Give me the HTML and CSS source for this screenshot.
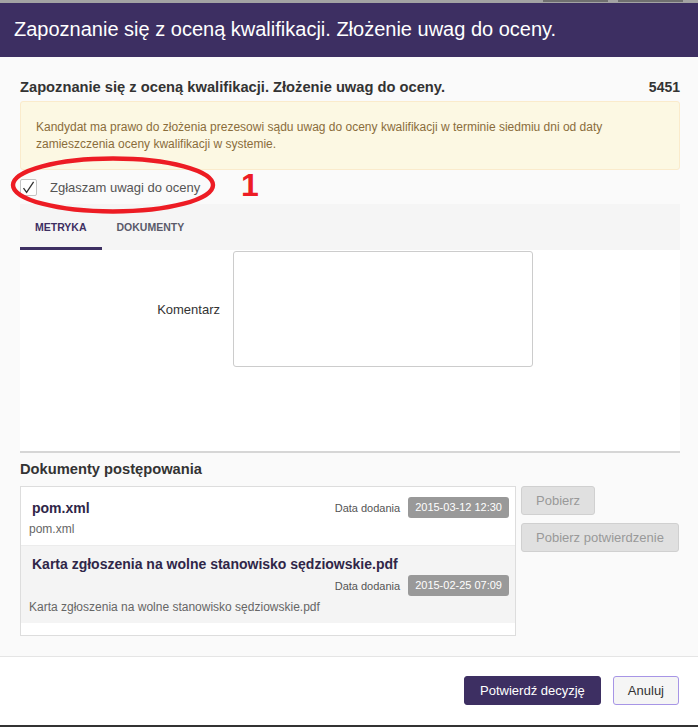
FILE: index.html
```html
<!DOCTYPE html>
<html lang="pl">
<head>
<meta charset="utf-8">
<title>Zapoznanie się z oceną kwalifikacji</title>
<link rel="stylesheet" href="styles.css">
</head>
<body>
<div class="topstrip"><span class="seg seg1"></span><span class="seg seg2"></span></div>
<div class="modal">
  <header class="modal-header">
    <h1>Zapoznanie się z oceną kwalifikacji. Złożenie uwag do oceny.</h1>
  </header>
  <div class="modal-body">
    <div class="section-head">
      <h2>Zapoznanie się z oceną kwalifikacji. Złożenie uwag do oceny.</h2>
      <span class="num">5451</span>
    </div>
    <div class="alert">Kandydat ma prawo do złożenia prezesowi sądu uwag do oceny kwalifikacji w terminie siedmiu dni od daty zamieszczenia oceny kwalifikacji w systemie.</div>
    <div class="check-row">
      <span class="cbox"><svg width="15" height="15" viewBox="0 0 15 15"><path d="M2.5 8.2 L5.6 12.4 L12.6 1.8" fill="none" stroke="#333" stroke-width="1.3"/></svg></span>
      <span class="check-label">Zgłaszam uwagi do oceny</span>
      <svg class="annot-ellipse" width="206" height="58" viewBox="0 0 206 58"><ellipse cx="103" cy="29" rx="100" ry="26.5" fill="none" stroke="#ed1c24" stroke-width="4.4"/></svg>
      <span class="annot-num">1</span>
    </div>
    <nav class="tabs">
      <a class="tab active">METRYKA</a>
      <a class="tab">DOKUMENTY</a>
    </nav>
    <div class="tab-pane">
      <div class="form-row">
        <label class="form-label">Komentarz</label>
        <div class="textarea"></div>
      </div>
    </div>
    <h3 class="docs-title">Dokumenty postępowania</h3>
    <div class="docs">
      <div class="doc-list">
        <div class="doc doc-first">
          <div class="doc-row">
            <span class="doc-name">pom.xml</span>
            <span class="doc-date"><span class="date-label">Data dodania</span><span class="badge">2015-03-12 12:30</span></span>
          </div>
          <div class="doc-desc">pom.xml</div>
        </div>
        <div class="doc doc-second">
          <div class="doc-name">Karta zgłoszenia na wolne stanowisko sędziowskie.pdf</div>
          <div class="doc-date doc-date-right"><span class="date-label">Data dodania</span><span class="badge">2015-02-25 07:09</span></div>
          <div class="doc-desc">Karta zgłoszenia na wolne stanowisko sędziowskie.pdf</div>
        </div>
      </div>
      <div class="doc-actions">
        <button class="btn-disabled">Pobierz</button>
        <button class="btn-disabled">Pobierz potwierdzenie</button>
      </div>
    </div>
  </div>
  <footer class="modal-footer">
    <button class="btn-primary">Potwierdź decyzję</button>
    <button class="btn-default">Anuluj</button>
  </footer>
</div>
<div class="bottom-line"></div>
</body>
</html>
```

FILE: styles.css
```css
* { box-sizing: border-box; }
html, body { margin: 0; padding: 0; }
body {
  font-family: "Liberation Sans", Arial, sans-serif;
  background: #fff;
  width: 698px;
  height: 727px;
  overflow: hidden;
}
.topstrip {
  height: 3px;
  background: #a3a3a3;
  display: flex;
  justify-content: flex-end;
  gap: 10px;
  padding-right: 15px;
}
.seg { width: 65px; height: 2px; background: #6f6f6f; }
.modal-header {
  height: 54px;
  background: #3d2f62;
  display: flex;
  align-items: center;
  padding: 0 14px 2px;
}
.modal-header h1 {
  margin: 0;
  color: #fff;
  font-weight: normal;
  font-size: 20px;
  line-height: 24px;
}
.modal-body {
  background: #fafafa;
  padding: 20px 18px 20px 20px;
}
.section-head {
  display: flex;
  justify-content: space-between;
  align-items: center;
  height: 20px;
}
.section-head h2 {
  margin: 0;
  font-size: 14.7px;
  line-height: 20px;
  color: #333;
}
.num { font-size: 14px; font-weight: bold; color: #333; }
.alert {
  margin-top: 4px;
  background: #fcf8e3;
  border: 1px solid #faebcc;
  border-radius: 3px;
  color: #8a6d3b;
  font-size: 12px;
  line-height: 17px;
  padding: 17px 50px 16px 15px;
}
.check-row {
  position: relative;
  height: 34px;
  display: flex;
  align-items: center;
}
.cbox {
  width: 17px;
  height: 17px;
  border: 1px solid #c4c4c4;
  border-radius: 2px;
  background: #fff;
  display: flex;
  align-items: center;
  justify-content: center;
}
.check-label {
  margin-left: 13px;
  font-size: 13px;
  color: #555;
}
.annot-ellipse {
  position: absolute;
  left: -10px;
  top: -14px;
}
.annot-num {
  position: absolute;
  left: 221px;
  top: -3px;
  font-size: 32px;
  font-weight: bold;
  color: #ed1c24;
  line-height: 36px;
}
.tabs {
  display: flex;
  background: #f5f5f5;
  height: 46px;
}
.tab {
  font-size: 10.5px;
  font-weight: bold;
  color: #5a5a6a;
  line-height: 14px;
  padding: 16px 15px 13px;
  border-bottom: 3px solid transparent;
}
.tab.active {
  color: #3d2f62;
  border-bottom-color: #3d2f62;
}
.tab-pane {
  background: #fff;
  height: 203px;
  padding-top: 1px;
  border-bottom: 2px solid #d6d6d6;
}
.form-row {
  display: grid;
  grid-template-columns: 200px 300px;
  column-gap: 13px;
  align-items: center;
}
.form-label {
  text-align: right;
  font-size: 13px;
  color: #333;
}
.textarea {
  height: 116px;
  border: 1px solid #ccc;
  border-radius: 3px;
  background: #fff;
}
.docs-title {
  margin: 6px 0 7px;
  font-size: 14.7px;
  line-height: 20px;
  color: #333;
}
.docs {
  display: flex;
  align-items: flex-start;
  gap: 5px;
}
.doc-list {
  width: 496px;
  border: 1px solid #ddd;
  background: #fff;
  padding-bottom: 12px;
}
.doc { padding: 0 6px 7px 8px; }
.doc-first { padding-top: 10px; }
.doc-second {
  padding-top: 8px;
  background: #f4f4f4;
  border-top: 1px solid #ececec;
}
.doc-row {
  display: flex;
  justify-content: space-between;
  align-items: center;
}
.doc-name {
  font-size: 14px;
  font-weight: bold;
  line-height: 20px;
  color: #2f2648;
  padding-left: 3px;
}
.doc-date {
  display: flex;
  align-items: center;
  gap: 8px;
}
.doc-date-right { justify-content: flex-end; margin-top: 1px; }
.date-label { font-size: 11px; color: #555; }
.badge {
  background: #999;
  color: #fff;
  font-size: 11px;
  height: 21px;
  line-height: 21px;
  padding: 0 7px;
  border-radius: 3px;
}
.doc-desc {
  margin-top: 3px;
  font-size: 12px;
  line-height: 17px;
  color: #666;
}
.doc-actions {
  display: flex;
  flex-direction: column;
  align-items: flex-start;
  gap: 8px;
}
button {
  font-family: "Liberation Sans", Arial, sans-serif;
  font-size: 13px;
  height: 29px;
  border-radius: 3px;
  padding: 0 14px;
}
.btn-disabled {
  background: #e0e0e0;
  border: 1px solid #d0d0d0;
  color: #999;
}
.modal-footer {
  border-top: 1px solid #e5e5e5;
  background: #fff;
  height: 69px;
  display: flex;
  justify-content: flex-end;
  align-items: flex-start;
  gap: 12px;
  padding: 19px 19px 0 0;
}
.btn-primary {
  background: #3d2f62;
  color: #fff;
  border: 1px solid #3d2f62;
  padding: 0 15px;
}
.btn-default {
  background: #f5f5f5;
  color: #333;
  border: 1px solid #a795e6;
  padding: 0 14px;
}
.bottom-line { height: 2px; background: #333; }
```
